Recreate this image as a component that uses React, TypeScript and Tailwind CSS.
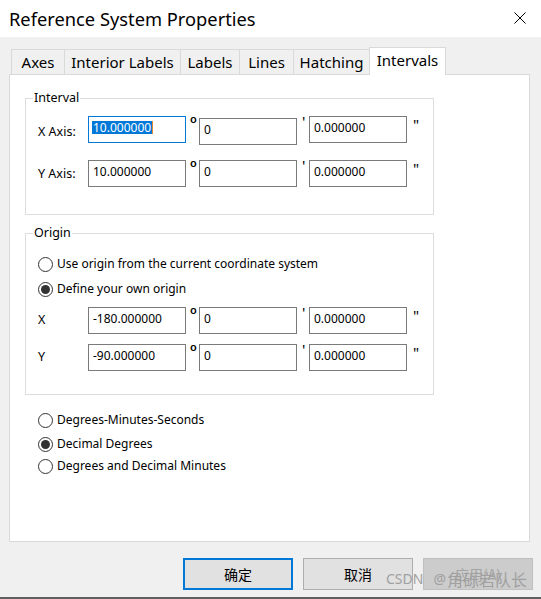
import { ReactNode } from 'react'

function Radio({ checked }: { checked?: boolean }) {
  return (
    <span className="flex h-[15px] w-[15px] shrink-0 items-center justify-center rounded-full border border-[#333333] bg-white">
      {checked && <span className="h-[9px] w-[9px] rounded-full bg-[#333333]" />}
    </span>
  )
}

function RadioRow({ checked, label, className = '' }: { checked?: boolean; label: string; className?: string }) {
  return (
    <div className={`flex h-[20px] items-center gap-[4px] ${className}`}>
      <Radio checked={checked} />
      <span className="text-[12px] leading-[16px]">{label}</span>
    </div>
  )
}

interface FieldProps {
  value: string
  focused?: boolean
  className?: string
}

function Field({ value, focused, className = '' }: FieldProps) {
  return (
    <div
      className={`h-[27px] w-[98px] shrink-0 border bg-white pl-[3px] pt-[4px] text-[12px] leading-[13px] ${
        focused ? 'border-[#0078d7]' : 'border-[#7a7a7a]'
      } ${className}`}
    >
      {focused ? (
        <span className="inline-flex items-stretch">
          <span className="bg-[#0078d7] px-[1px] text-white">{value}</span>
          <span className="w-[1px] bg-[#e8872c]" />
        </span>
      ) : (
        <span className="pl-[1px]">{value}</span>
      )}
    </div>
  )
}

interface CoordRowProps {
  label: string
  labelPt: string
  deg: string
  focused?: boolean
  midShift?: boolean
  className?: string
}

function CoordRow({ label, labelPt, deg, focused, midShift, className = '' }: CoordRowProps) {
  return (
    <div className={`flex items-start ${className}`}>
      <span className={`w-[50px] shrink-0 text-[12.5px] leading-[16px] ${labelPt}`}>{label}</span>
      <Field value={deg} focused={focused} />
      <span className="-mt-[2px] w-[13px] shrink-0 pl-[4px] text-[11px] font-semibold leading-[10px]">o</span>
      <Field value="0" className={midShift ? 'mt-[2px]' : ''} />
      <span className="-mt-[1px] w-[12px] shrink-0 pl-[5px] text-[15px] leading-[12px]">'</span>
      <Field value="0.000000" />
      <span className="mt-[2px] shrink-0 pl-[6px] text-[15px] leading-[12px]">"</span>
    </div>
  )
}

function GroupBox({ title, className, children }: { title: string; className: string; children: ReactNode }) {
  return (
    <div className={`relative ml-[15px] w-[409px] border border-[#dcdcdc] ${className}`}>
      <span className="absolute -top-[9px] left-[7px] bg-white px-[1px] text-[12.5px] leading-[16px]">{title}</span>
      {children}
    </div>
  )
}

const tabs = [
  { name: 'Axes', w: 'w-[53px]' },
  { name: 'Interior Labels', w: 'w-[116px]' },
  { name: 'Labels', w: 'w-[59px]' },
  { name: 'Lines', w: 'w-[54px]' },
  { name: 'Hatching', w: 'w-[76px]' },
]

export default function App() {
  return (
    <div className="relative flex h-[599px] w-[541px] flex-col overflow-hidden border-b-2 border-[#5f5f5f] bg-[#f0f0f0] font-['Noto_Sans',sans-serif] text-black">
      {/* Title bar */}
      <div className="flex h-[37px] shrink-0 items-center justify-between bg-white pl-[9px] pr-[15px]">
        <span className="text-[18.3px] leading-[37px]">Reference System Properties</span>
        <svg width="12" height="12" viewBox="0 0 12 12" className="mb-[1px]">
          <path d="M0.5 0.5 L11.5 11.5 M11.5 0.5 L0.5 11.5" stroke="#000" strokeWidth="1" fill="none" />
        </svg>
      </div>

      {/* Tabs */}
      <div className="mt-[10px] flex h-[27px] items-end pl-[11px]">
        {tabs.map((t) => (
          <div
            key={t.name}
            className={`h-[25px] border-l border-t border-[#d9d9d9] text-center text-[15px] leading-[24px] ${t.w}`}
          >
            {t.name}
          </div>
        ))}
        <div className="relative z-10 -mb-px h-[28px] w-[77px] border-x border-t border-[#d9d9d9] bg-white text-center text-[15px] leading-[24px]">
          Intervals
        </div>
      </div>

      {/* Tab panel */}
      <div className="ml-[9px] flex h-[468px] w-[521px] flex-col border border-[#d9d9d9] bg-white">
        <GroupBox title="Interval" className="mt-[23px] h-[117px]">
          <div className="flex flex-col gap-[15px] pl-[12px] pt-[17px]">
            <CoordRow label="X Axis:" labelPt="pt-[8px]" deg="10.000000" focused midShift />
            <CoordRow label="Y Axis:" labelPt="pt-[6px]" deg="10.000000" />
          </div>
        </GroupBox>

        <GroupBox title="Origin" className="mt-[18px] h-[162px]">
          <div className="flex flex-col pl-[12px] pt-[20px]">
            <RadioRow label="Use origin from the current coordinate system" />
            <RadioRow checked label="Define your own origin" className="mt-[5px]" />
            <CoordRow label="X" labelPt="pt-[5px]" deg="-180.000000" className="mt-[8px]" />
            <CoordRow label="Y" labelPt="pt-[5px]" deg="-90.000000" className="mt-[10px]" />
          </div>
        </GroupBox>

        <div className="flex flex-col pl-[28px]">
          <RadioRow label="Degrees-Minutes-Seconds" className="mt-[15px]" />
          <RadioRow checked label="Decimal Degrees" className="mt-[4px]" />
          <RadioRow label="Degrees and Decimal Minutes" className="mt-[2px]" />
        </div>
      </div>

      {/* Buttons */}
      <div className="mt-[16px] flex justify-end gap-[10px] pr-[8px] font-['Noto_Sans_CJK_SC','Noto_Sans',sans-serif] text-[14px]">
        <button className="h-[32px] w-[110px] border-2 border-[#0078d7] bg-[#e1e1e1]">确定</button>
        <button className="h-[32px] w-[110px] border border-[#adadad] bg-[#e1e1e1]">取消</button>
        <button className="h-[32px] w-[110px] border border-[#bfbfbf] bg-[#cccccc] text-[#a3a3a3]">应用(A)</button>
      </div>

      {/* Watermark */}
      <div className="pointer-events-none absolute left-[386px] top-[570px] flex items-center text-[#a0a0a0]">
        <span className="text-[14px] leading-[18px]">CSDN</span>
        <span className="ml-[10px] text-[14px] leading-[18px]">@</span>
        <span className="ml-[1px] font-['Noto_Sans_CJK_SC',sans-serif] text-[16px] leading-[18px]">角砾岩队长</span>
      </div>
    </div>
  )
}
